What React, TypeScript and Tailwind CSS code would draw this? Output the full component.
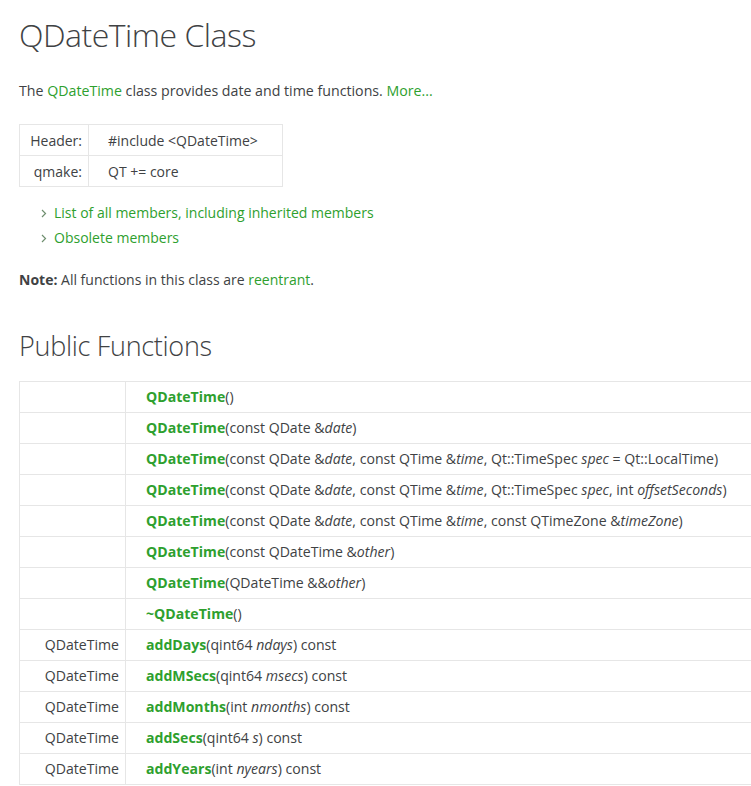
import React from 'react'

type Param = { t: string; i?: boolean }
type Fn = { ret?: string; name: string; params: Param[] }

const fns: Fn[] = [
  { name: 'QDateTime', params: [{ t: '()' }] },
  { name: 'QDateTime', params: [{ t: '(const QDate &' }, { t: 'date', i: true }, { t: ')' }] },
  {
    name: 'QDateTime',
    params: [
      { t: '(const QDate &' },
      { t: 'date', i: true },
      { t: ', const QTime &' },
      { t: 'time', i: true },
      { t: ', Qt::TimeSpec ' },
      { t: 'spec', i: true },
      { t: ' = Qt::LocalTime)' },
    ],
  },
  {
    name: 'QDateTime',
    params: [
      { t: '(const QDate &' },
      { t: 'date', i: true },
      { t: ', const QTime &' },
      { t: 'time', i: true },
      { t: ', Qt::TimeSpec ' },
      { t: 'spec', i: true },
      { t: ', int ' },
      { t: 'offsetSeconds', i: true },
      { t: ')' },
    ],
  },
  {
    name: 'QDateTime',
    params: [
      { t: '(const QDate &' },
      { t: 'date', i: true },
      { t: ', const QTime &' },
      { t: 'time', i: true },
      { t: ', const QTimeZone &' },
      { t: 'timeZone', i: true },
      { t: ')' },
    ],
  },
  { name: 'QDateTime', params: [{ t: '(const QDateTime &' }, { t: 'other', i: true }, { t: ')' }] },
  { name: 'QDateTime', params: [{ t: '(QDateTime &&' }, { t: 'other', i: true }, { t: ')' }] },
  { name: '~QDateTime', params: [{ t: '()' }] },
  { ret: 'QDateTime', name: 'addDays', params: [{ t: '(qint64 ' }, { t: 'ndays', i: true }, { t: ') const' }] },
  { ret: 'QDateTime', name: 'addMSecs', params: [{ t: '(qint64 ' }, { t: 'msecs', i: true }, { t: ') const' }] },
  { ret: 'QDateTime', name: 'addMonths', params: [{ t: '(int ' }, { t: 'nmonths', i: true }, { t: ') const' }] },
  { ret: 'QDateTime', name: 'addSecs', params: [{ t: '(qint64 ' }, { t: 's', i: true }, { t: ') const' }] },
  { ret: 'QDateTime', name: 'addYears', params: [{ t: '(int ' }, { t: 'nyears', i: true }, { t: ') const' }] },
]

function Chevron() {
  return (
    <svg width="6" height="9" viewBox="0 0 6 9" className="mt-[1px] shrink-0">
      <path d="M1 1l3.5 3.5L1 8" fill="none" stroke="#6f8f6f" strokeWidth="1.2" />
    </svg>
  )
}

export default function App() {
  return (
    <div
      className="w-[751px] h-[786px] overflow-hidden bg-white pl-[19px] text-[#404244]"
      style={{ fontFamily: '"Open Sans", sans-serif' }}
    >
      <h1 className="pt-[14px] text-[32px] font-light leading-[42px] tracking-[-0.5px]">QDateTime Class</h1>

      <p className="mt-[25px] text-[14.2px] leading-[20px]">
        The <span className="text-[#2ea02e]">QDateTime</span> class provides date and time functions.{' '}
        <span className="text-[#2ea02e]">More...</span>
      </p>

      <table className="mt-[23px] border-collapse text-[14px]">
        <tbody>
          <tr className="h-[31px]">
            <td className="w-[69px] border border-[#e6e6e6] pr-[6px] text-right">Header:</td>
            <td className="w-[194px] border border-[#e6e6e6] pl-[19px]">#include &lt;QDateTime&gt;</td>
          </tr>
          <tr className="h-[31px]">
            <td className="border border-[#e6e6e6] pr-[6px] text-right">qmake:</td>
            <td className="border border-[#e6e6e6] pl-[19px]">QT += core</td>
          </tr>
        </tbody>
      </table>

      <ul className="mt-[16px] flex flex-col gap-[5px] pl-[22px] text-[14px] leading-[20px]">
        <li className="flex items-center gap-[7px]">
          <Chevron />
          <span className="text-[#2ea02e]">List of all members, including inherited members</span>
        </li>
        <li className="flex items-center gap-[7px]">
          <Chevron />
          <span className="text-[#2ea02e]">Obsolete members</span>
        </li>
      </ul>

      <p className="mt-[22px] text-[14px] leading-[20px]">
        <b className="font-bold">Note:</b> All functions in this class are{' '}
        <span className="text-[#2ea02e]">reentrant</span>.
      </p>

      <h2 className="mt-[39px] text-[27px] font-light leading-[34px] tracking-[-0.3px]">Public Functions</h2>

      <table className="mt-[18px] w-[760px] border-collapse text-[14.1px]">
        <tbody>
          {fns.map((f, idx) => (
            <tr key={idx} className="h-[31px]">
              <td className="w-[106px] border border-[#e6e6e6] pr-[6px] text-right">{f.ret ?? ''}</td>
              <td className="border border-[#e6e6e6] pl-[20px] whitespace-nowrap">
                <span className="font-bold text-[#2ea02e]">{f.name}</span>
                {f.params.map((p, j) =>
                  p.i ? (
                    <i key={j} className="italic">
                      {p.t}
                    </i>
                  ) : (
                    <span key={j}>{p.t}</span>
                  ),
                )}
              </td>
            </tr>
          ))}
        </tbody>
      </table>
    </div>
  )
}
